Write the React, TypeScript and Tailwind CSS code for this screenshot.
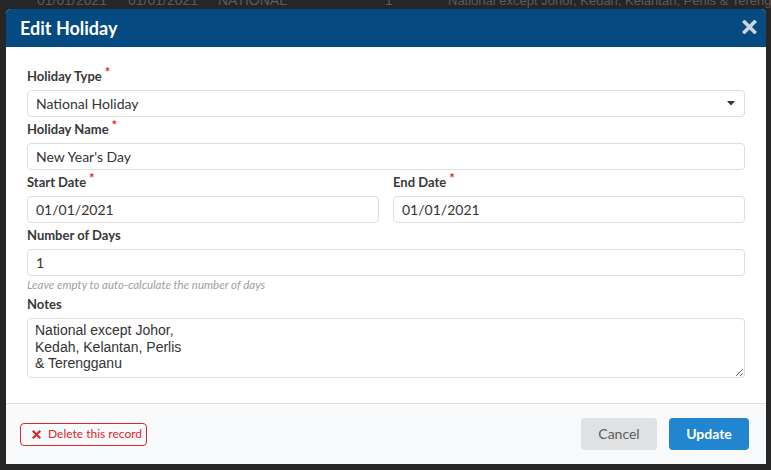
import React from 'react';

function Req() {
  return <span className="ml-[3px] relative -top-[4px] text-[13px] leading-none text-[#db2828]">*</span>;
}

function Label({ children, required }: { children: React.ReactNode; required?: boolean }) {
  return (
    <div className="h-[17px] leading-[17px] text-[13px] font-bold text-[#383838] mb-[5px]">
      {children}
      {required && <Req />}
    </div>
  );
}

function Field({ value }: { value: string }) {
  return (
    <input
      readOnly
      defaultValue={value}
      className="block w-full h-[27px] px-[8px] border border-[#dedede] rounded-[4px] text-[14px] text-[#333] bg-white outline-none font-['Lato',sans-serif]"
    />
  );
}

export default function App() {
  return (
    <div className="relative w-[771px] h-[470px] overflow-hidden bg-[#262626] font-['Lato',sans-serif]">
      {/* table row behind the overlay */}
      <div className="flex -mt-[8px] h-[17px] leading-[17px] text-[14px] text-[#5b5b5b] whitespace-nowrap font-['Liberation_Sans_Narrow','Liberation_Sans',sans-serif]">
        <span className="shrink-0 ml-[37px] w-[91px]">01/01/2021</span>
        <span className="shrink-0 w-[90px]">01/01/2021</span>
        <span className="shrink-0 w-[167px]">NATIONAL</span>
        <span className="shrink-0 w-[63px]">1</span>
        <span className="shrink-0 text-[13px]">National except Johor, Kedah, Kelantan, Perlis &amp; Terengganu</span>
      </div>

      <div className="absolute left-[6px] top-[9px] w-[760px] bg-white rounded-t-[5px] overflow-hidden">
        {/* header */}
        <div className="h-[38px] bg-[#054a80] flex items-center justify-between pl-[14px] pr-[9px]">
          <span className="text-[18px] font-bold text-white leading-none">Edit Holiday</span>
          <svg width="15" height="14" viewBox="0 0 15 14" className="mt-[-2px]">
            <path d="M2.5 2 L12.5 12 M12.5 2 L2.5 12" stroke="#c9d4df" strokeWidth="3.6" strokeLinecap="square" />
          </svg>
        </div>

        {/* body */}
        <div className="px-[21px] pt-[21px] pb-[25px]">
          <Label required>Holiday Type</Label>
          <div className="flex items-center justify-between h-[27px] pl-[8px] pr-[9px] border border-[#dedede] rounded-[4px] text-[14px] text-[#333]">
            <span>National Holiday</span>
            <svg width="8" height="5" viewBox="0 0 8 5">
              <path d="M0 0 L8 0 L4 4.5 Z" fill="#333" />
            </svg>
          </div>

          <div className="mt-[4px]">
            <Label required>Holiday Name</Label>
            <Field value="New Year's Day" />
          </div>

          <div className="mt-[4px] grid grid-cols-2 gap-[14px]">
            <div>
              <Label required>Start Date</Label>
              <Field value="01/01/2021" />
            </div>
            <div>
              <Label required>End Date</Label>
              <Field value="01/01/2021" />
            </div>
          </div>

          <div className="mt-[4px]">
            <Label>Number of Days</Label>
            <Field value="1" />
            <div className="mt-[1px] h-[15px] leading-[15px] text-[11.5px] italic text-[#a0a0a0]">
              Leave empty to auto-calculate the number of days
            </div>
          </div>

          <div className="mt-[4px]">
            <Label>Notes</Label>
            <textarea
              readOnly
              defaultValue={'National except Johor,\nKedah, Kelantan, Perlis\n& Terengganu'}
              className="block w-full h-[60px] pt-[3px] px-[7px] border border-[#dedede] rounded-[4px] text-[14px] leading-[16.5px] text-[#333] outline-none font-['Liberation_Sans',Arial,sans-serif]"
            />
          </div>
        </div>

        {/* footer */}
        <div className="h-[61px] border-t border-[#dcdcdc] bg-[#f9fafb] flex items-center justify-between pl-[14px] pr-[17px]">
          <button className="h-[23px] w-[127px] flex items-center gap-[7px] pl-[11px] border border-[#db2828] rounded-[4px] text-[12px] text-[#db2828] bg-transparent">
            <svg width="9" height="9" viewBox="0 0 9 9">
              <path d="M1.5 1.5 L7.5 7.5 M7.5 1.5 L1.5 7.5" stroke="#db2828" strokeWidth="2.2" strokeLinecap="square" />
            </svg>
            <span>Delete this record</span>
          </button>
          <div className="flex gap-[12px]">
            <button className="h-[32px] w-[76px] pb-[2px] rounded-[4px] bg-[#e0e1e2] text-[14px] text-[#5c5c5c]">Cancel</button>
            <button className="h-[32px] w-[80px] pb-[2px] rounded-[4px] bg-[#2185d0] text-[14px] font-bold text-white">Update</button>
          </div>
        </div>
      </div>
    </div>
  );
}
